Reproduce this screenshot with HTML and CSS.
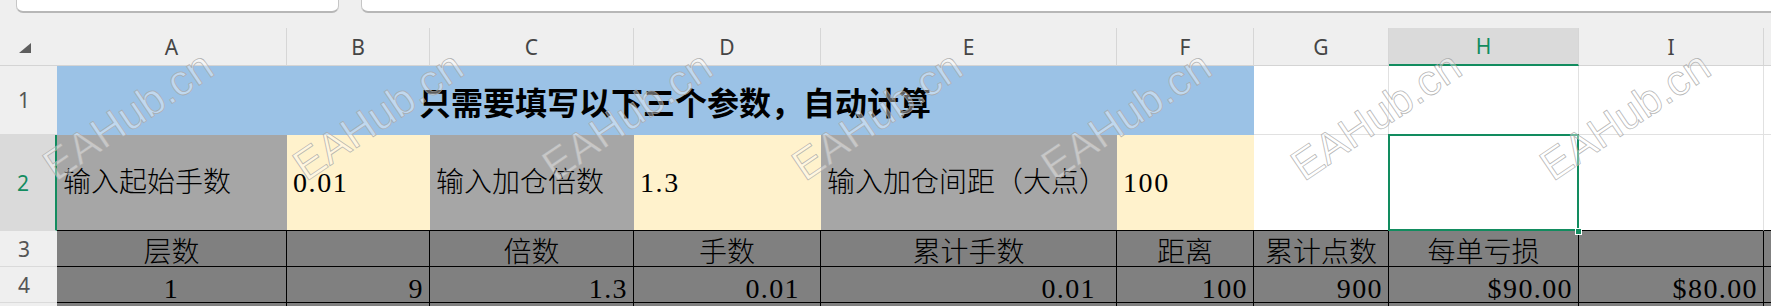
FILE: index.html
```html
<!DOCTYPE html>
<html lang="zh-CN">
<head>
    <meta charset="UTF-8">
    <title>加仓计算表</title>
    <link rel="stylesheet" href="styles.css">
</head>
<body>
    <!-- name box + formula bar -->
    <div class="topbar">
        <div class="namebox"></div>
        <div class="fxbox"></div>
    </div>

    <div class="sheet">
        <!-- column headers -->
        <div class="corner"><span class="tri"></span></div>
        <div class="ch">A</div>
        <div class="ch">B</div>
        <div class="ch">C</div>
        <div class="ch">D</div>
        <div class="ch">E</div>
        <div class="ch">F</div>
        <div class="ch">G</div>
        <div class="ch ch-sel">H</div>
        <div class="ch">I</div>
        <div class="ch"></div>

        <!-- row 1 -->
        <div class="rh">1</div>
        <div class="cell title">只需要填写以下三个参数，自动计算</div>
        <div class="cell"></div>
        <div class="cell"></div>
        <div class="cell"></div>
        <div class="cell"></div>

        <!-- row 2 -->
        <div class="rh rh-sel">2</div>
        <div class="cell r2 label">输入起始手数</div>
        <div class="cell r2 input">0.01</div>
        <div class="cell r2 label">输入加仓倍数</div>
        <div class="cell r2 input">1.3</div>
        <div class="cell r2 label">输入加仓间距（大点）</div>
        <div class="cell r2 input">100</div>
        <div class="cell r2 plain"></div>
        <div class="cell r2 plain active"><span class="handle"></span></div>
        <div class="cell r2 plain"></div>
        <div class="cell r2 plain"></div>

        <!-- row 3 -->
        <div class="rh">3</div>
        <div class="cell dark head">层数</div>
        <div class="cell dark head"></div>
        <div class="cell dark head">倍数</div>
        <div class="cell dark head">手数</div>
        <div class="cell dark head">累计手数</div>
        <div class="cell dark head">距离</div>
        <div class="cell dark head">累计点数</div>
        <div class="cell dark head">每单亏损</div>
        <div class="cell dark head"></div>
        <div class="cell dark head"></div>

        <!-- row 4 -->
        <div class="rh">4</div>
        <div class="cell dark num center">1</div>
        <div class="cell dark num">9</div>
        <div class="cell dark num">1.3</div>
        <div class="cell dark num wide">0.01</div>
        <div class="cell dark num wide">0.01</div>
        <div class="cell dark num">100</div>
        <div class="cell dark num">900</div>
        <div class="cell dark num">$90.00</div>
        <div class="cell dark num">$80.00</div>
        <div class="cell dark num"></div>

        <!-- row 5 (only its top edge is in view) -->
        <div class="rh"></div>
        <div class="cell dark"></div>
        <div class="cell dark"></div>
        <div class="cell dark"></div>
        <div class="cell dark"></div>
        <div class="cell dark"></div>
        <div class="cell dark"></div>
        <div class="cell dark"></div>
        <div class="cell dark"></div>
        <div class="cell dark"></div>
        <div class="cell dark"></div>
    </div>

    <!-- watermark layer -->
    <svg class="watermarks" width="1771" height="306" viewBox="0 0 1771 306">
        <g class="wm">
            <text transform="translate(56 182) rotate(-34)">EAHub.cn</text>
            <text transform="translate(306 182) rotate(-34)">EAHub.cn</text>
            <text transform="translate(555 182) rotate(-34)">EAHub.cn</text>
            <text transform="translate(805 182) rotate(-34)">EAHub.cn</text>
            <text transform="translate(1054 182) rotate(-34)">EAHub.cn</text>
            <text transform="translate(1304 182) rotate(-34)">EAHub.cn</text>
            <text transform="translate(1553 182) rotate(-34)">EAHub.cn</text>
        </g>
    </svg>
</body>
</html>
```

FILE: styles.css
```css
:root {
    --green: #128c5f;
    --bar-bg: #efefef;
    --grid: #e1e1e1;
    --blue: #9bc2e6;
    --label: #a6a6a6;
    --input: #fff2cc;
    --dark: #808080;
}

* {
    margin: 0;
    padding: 0;
    box-sizing: border-box;
}

html, body {
    height: 306px;
    overflow: hidden;
}

body {
    position: relative;
    background: #fff;
    font-family: "Noto Sans", sans-serif;
}

/* Top bar */
.topbar {
    height: 28px;
    background: var(--bar-bg);
    display: flex;
    align-items: flex-start;
    gap: 22px;
    padding-left: 16px;
}

.namebox,
.fxbox {
    height: 13px;
    background: #fff;
    border: 1px solid #c6c6c6;
    border-top: none;
    border-bottom: 2px solid #b7b7b7;
    border-radius: 0 0 7px 7px;
}

.namebox {
    width: 323px;
}

.fxbox {
    flex: 1;
    margin-right: -20px;
}

/* Sheet grid */
.sheet {
    display: grid;
    grid-template-columns: 57px 230px 143px 204px 187px 296px 137px 135px 190px 185px 120px;
    grid-template-rows: 38px 69px 96px 36px 36px 36px;
}

.corner {
    background: var(--bar-bg);
    border-bottom: 1px solid #d4d4d4;
    position: relative;
}

.tri {
    position: absolute;
    left: 19px;
    top: 15px;
    width: 0;
    height: 0;
    border-left: 12px solid transparent;
    border-bottom: 10px solid #5e5e5e;
}

.ch {
    background: var(--bar-bg);
    border-right: 1px solid #d6d6d6;
    border-bottom: 1px solid #d4d4d4;
    display: flex;
    align-items: center;
    justify-content: center;
    font-size: 21px;
    color: #454545;
}

.ch-sel {
    background: #dadada;
    color: var(--green);
    border-bottom: 2px solid var(--green);
}

.rh {
    background: var(--bar-bg);
    border-bottom: 1px solid #dadada;
    display: flex;
    align-items: center;
    justify-content: center;
    padding-right: 9px;
    font-size: 21px;
    color: #555;
}

.rh-sel {
    background: #dadada;
    color: var(--green);
    border-right: 2px solid var(--green);
}

/* Cells */
.cell {
    border-right: 1px solid var(--grid);
    border-bottom: 1px solid var(--grid);
    display: flex;
    align-items: center;
    font-family: "Liberation Serif", "Noto Sans CJK SC", serif;
    font-size: 28px;
    font-weight: 300;
    line-height: 1.2;
    color: #000;
    white-space: nowrap;
}

.title {
    grid-column: span 6;
    background: var(--blue);
    border: none;
    padding: 7px 0 0 362px;
    font-size: 32px;
    font-weight: 700;
}

.r2 {
    border-right: none;
    border-bottom: 1px solid #000;
    padding: 0 0 0 6px;
}

.r2.plain {
    border-right: 1px solid var(--grid);
}

.label {
    background: var(--label);
}

.input {
    background: var(--input);
    letter-spacing: 1.6px;
}

.active {
    position: relative;
}

.active::after {
    content: "";
    position: absolute;
    inset: -1px;
    border: 2px solid var(--green);
}

.handle {
    position: absolute;
    right: -4px;
    bottom: -5px;
    width: 7px;
    height: 7px;
    background: var(--green);
    border: 1px solid #fff;
    z-index: 2;
}

.dark {
    background: var(--dark);
    border-right: 1px solid #000;
    border-bottom: 1px solid #000;
}

.head {
    justify-content: center;
    line-height: 1;
    padding-top: 9px;
}

.num {
    justify-content: flex-end;
    line-height: 1;
    letter-spacing: 1.4px;
    padding: 8px 5px 0 0;
}

.num.center {
    justify-content: center;
    padding-right: 0;
}

.num.wide {
    padding-right: 20px;
}

/* Watermark */
.watermarks {
    position: absolute;
    top: 0;
    left: 0;
    pointer-events: none;
    z-index: 5;
}

.wm text {
    font-family: "Liberation Sans", sans-serif;
    font-size: 43px;
    fill: rgba(255, 255, 255, 0.4);
    stroke: rgba(165, 165, 165, 0.8);
    stroke-width: 0.8px;
}
```
